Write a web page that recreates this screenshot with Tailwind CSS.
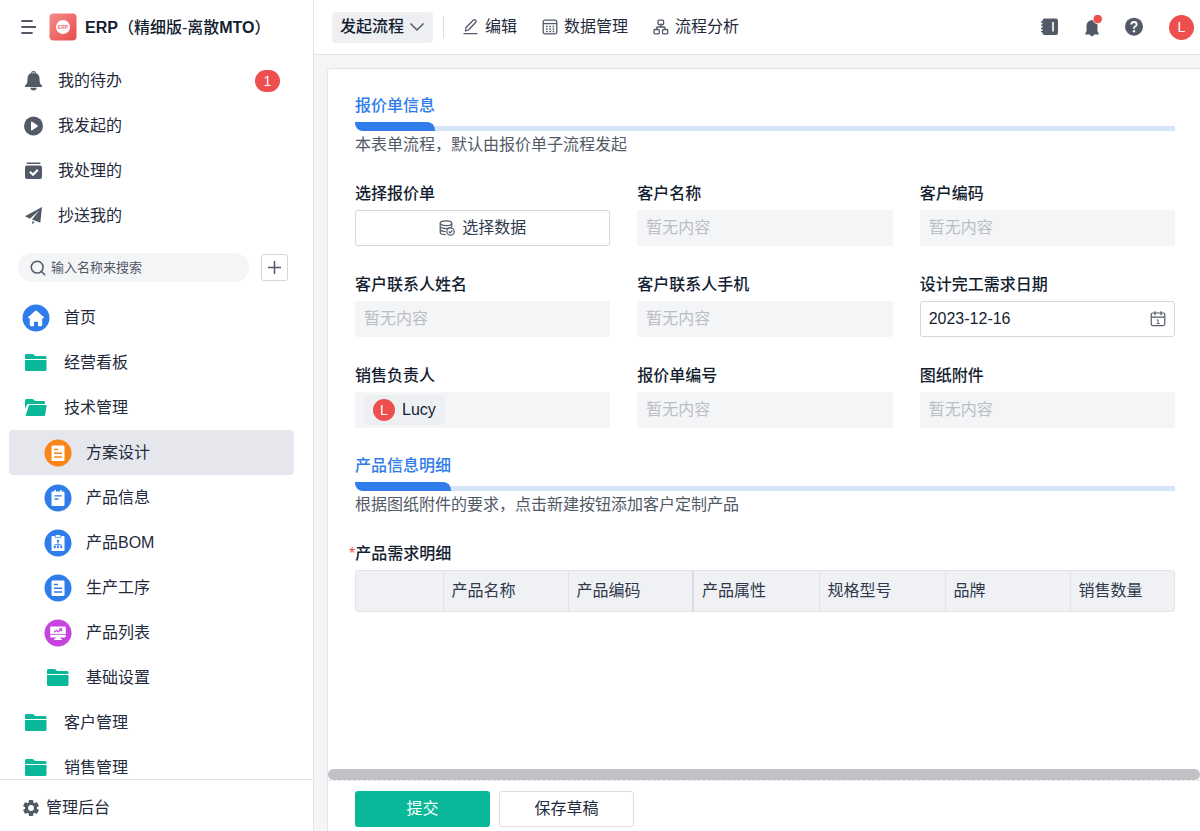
<!DOCTYPE html>
<html lang="zh-CN">
<head>
    <meta charset="UTF-8">
    <meta name="viewport" content="width=device-width, initial-scale=1.0">
    <title>ERP（精细版-离散MTO）</title>
    <script src="https://cdn.jsdelivr.net/npm/@tailwindcss/browser@4"></script>
</head>
<body class="flex h-screen overflow-hidden bg-[#f4f5f7] font-['Liberation_Sans','Noto_Sans_CJK_SC',sans-serif] text-base leading-6 text-[#1f2a3d]">
    <!-- Shared icons -->
    <svg class="hidden">
        <symbol id="folder" viewBox="0 0 22 18">
            <path fill="#08b899" d="M0 5V1.500Q0 0 1.500 0H7q1 0 1.700.6L10 2h10q1.500 0 1.500 1.500V5ZM0 6h21.500v9.500q0 1.500-1.500 1.500H1.500Q0 17 0 15.500Z"/>
        </symbol>
        <symbol id="folder-open" viewBox="0 0 22 18">
            <path fill="#08b899" d="M0 10V1.500Q0 0 1.500 0H7q1 0 1.700.6L10 2h8.500Q20 2 20 3.500V5H3.500Q2.200 5 1.800 6ZM4 6h16.500q1.200 0 1 1.200l-1.300 8.500q-.2 1.300-1.500 1.300H.6Z"/>
        </symbol>
        <symbol id="doc" viewBox="0 0 28 28">
            <circle cx="14" cy="14" r="13.500" fill="currentColor"/>
            <rect x="7.500" y="6.500" width="13" height="15.500" rx="1.200" fill="#fff"/>
            <path stroke="currentColor" stroke-width="1.400" d="M10 10.500h4M10 14.200h8M10 18h8"/>
        </symbol>
    </svg>

    <!-- Sidebar -->
    <aside class="flex w-[314px] shrink-0 flex-col border-r border-[#e2e4e8] bg-white">
        <div class="flex h-[54px] shrink-0 items-center pl-5">
            <button type="button" aria-label="菜单">
                <svg class="h-4 w-4" viewBox="0 0 16 16" fill="none" stroke="#525967" stroke-width="1.800" stroke-linecap="round"><path d="M2 2h10M2 8h14M2 14h10"/></svg>
            </button>
            <svg class="ml-[13px] h-7 w-7" viewBox="0 0 28 28">
                <defs>
                    <linearGradient id="logo" x1="0" y1="0" x2="1" y2="1"><stop offset="0" stop-color="#f58c8a"/><stop offset="1" stop-color="#e94b4b"/></linearGradient>
                </defs>
                <rect x=".5" y=".5" width="27" height="27" rx="4" fill="url(#logo)"/>
                <circle cx="14" cy="14" r="7" fill="#fff"/>
                <text x="14" y="15.800" font-size="5" font-weight="bold" text-anchor="middle" fill="#ee6b6a">ERP</text>
            </svg>
            <h1 class="mt-px ml-2 font-medium whitespace-nowrap text-[#141e31]"><b>ERP</b>（精细版-离散<b>MTO</b>）</h1>
        </div>

        <nav class="mt-1 text-[#1f2a3d]">
            <a href="#" class="flex h-[45px] items-center pl-6">
                <svg class="h-5 w-5" viewBox="0 0 20 20" fill="#525967"><path d="M9.500 0Q11.800 0 12 2.200q3.500 1.300 3.500 5.500 0 3.500.8 5 .6 1 1.700 1.700V16H1v-1.600q1.100-.7 1.700-1.700.8-1.500.8-5Q3.500 3.500 7 2.200 7.200 0 9.500 0Z"/><path d="M6 16.800h7q-.8 2.700-3.500 2.700T6 16.800Z"/><path d="M8.300 2q1.200-.8 2.400 0" stroke="#fff" fill="none"/></svg>
                <span class="ml-[14px]">我的待办</span>
                <span class="mr-[33px] ml-auto flex h-[22px] w-[25px] items-center justify-center rounded-full bg-[#ec4f4e] text-sm text-white">1</span>
            </a>
            <a href="#" class="flex h-[45px] items-center pl-6">
                <svg class="h-5 w-5" viewBox="0 0 20 20"><circle cx="9.500" cy="10" r="9.500" fill="#525967"/><path fill="#fff" d="M7 6.500q0-1.300 1.200-.7l5.200 3.500q.9.700 0 1.400l-5.200 3.500Q7 14.800 7 13.500Z"/></svg>
                <span class="ml-[14px]">我发起的</span>
            </a>
            <a href="#" class="flex h-[45px] items-center pl-6">
                <svg class="h-5 w-5" viewBox="0 0 20 20"><path fill="#525967" d="M3.500 1.500h12q1 0 1.200 1.500H2.300q.2-1.500 1.200-1.500ZM3 4.500h13q2 0 2 2V16q0 2-2 2H3q-2 0-2-2V6.500q0-2 2-2Z"/><path d="m6 10.700 3 3 4.800-4.800" fill="none" stroke="#fff" stroke-width="2.200"/></svg>
                <span class="ml-[14px]">我处理的</span>
            </a>
            <a href="#" class="flex h-[45px] items-center pl-6">
                <svg class="h-5 w-5" viewBox="0 0 20 20" fill="#525967"><path d="M18 1 1 10.300l5 2.500L15.500 4 8 13.600l8.300 3.200Zm-9.700 14v3.500l2.300-2.500Z"/></svg>
                <span class="ml-[14px]">抄送我的</span>
            </a>
        </nav>

        <div class="mt-[15px] mr-[25px] ml-[18px] flex shrink-0 items-center gap-3">
            <label class="flex h-[29px] min-w-0 flex-1 items-center gap-[5px] rounded-full bg-[#f4f5f7] pl-3">
                <svg class="h-4 w-4 shrink-0" viewBox="0 0 16 16" fill="none" stroke="#525967" stroke-width="1.500" stroke-linecap="round"><circle cx="7.200" cy="7.200" r="5.900"/><path d="m11.500 11.500 3.200 3.200"/></svg>
                <input type="text" aria-label="搜索" placeholder="输入名称来搜索" class="min-w-0 flex-1 bg-transparent text-[13px] leading-5 outline-none placeholder:text-[#525967]">
            </label>
            <button type="button" aria-label="新建" class="flex h-[27px] w-[27px] items-center justify-center rounded-[3px] border border-[#d5d7db]">
                <svg class="h-[13px] w-[13px]" viewBox="0 0 13 13" stroke="#525967" stroke-width="1.500"><path d="M6.500 0v13M0 6.500h13"/></svg>
            </button>
        </div>

        <nav class="mt-[13px] min-h-0 flex-1 overflow-hidden px-[9px]">
            <a href="#" class="flex h-[45px] items-center gap-[14px] pl-[13px]">
                <svg class="h-7 w-7" viewBox="0 0 28 28"><circle cx="14" cy="14" r="13.500" fill="#2f7ceb"/><path fill="#fff" d="M13.300 6.800q.7-.6 1.400 0l7 6.200q.8 1-.5 1.200h-1V21q0 1.200-1.200 1.200h-3v-4.500h-4v4.500H9q-1.200 0-1.200-1.200v-6.800h-1q-1.300-.2-.5-1.200Z"/></svg>
                首页
            </a>
            <a href="#" class="flex h-[45px] items-center gap-[17px] pl-4"><svg class="h-[18px] w-[22px]"><use href="#folder"/></svg>经营看板</a>
            <a href="#" class="flex h-[45px] items-center gap-[17px] pl-4"><svg class="h-[18px] w-[22px]"><use href="#folder-open"/></svg>技术管理</a>
            <a href="#" aria-current="page" class="mr-[10px] flex h-[45px] items-center gap-[14px] rounded bg-[#e6e7ec] pl-[35px]"><svg class="h-7 w-7 text-[#fa8418]"><use href="#doc"/></svg>方案设计</a>
            <a href="#" class="flex h-[45px] items-center gap-[14px] pl-[35px]">
                <svg class="h-7 w-7" viewBox="0 0 28 28"><circle cx="14" cy="14" r="13.500" fill="#2f7ceb"/><rect x="7.500" y="7.500" width="13" height="14.500" rx="1.200" fill="#fff"/><path stroke="#fff" stroke-width="1.500" d="M11.200 6v3M16.800 6v3"/><path stroke="#2f7ceb" stroke-width="1.300" d="M10.500 11.800h7.200M10.500 15h4"/></svg>
                产品信息
            </a>
            <a href="#" class="flex h-[45px] items-center gap-[14px] pl-[35px]">
                <svg class="h-7 w-7" viewBox="0 0 28 28"><circle cx="14" cy="14" r="13.500" fill="#2f7ceb"/><rect x="7.500" y="7" width="13" height="15" rx="1" fill="#fff"/><path fill="none" stroke="#2f7ceb" stroke-width=".8" d="M11 6.500v1.800h6V6.500M14 12v3.500M10.800 18v-2.300h6.400V18M14 15v3"/><path stroke="#fff" stroke-width="1.500" d="M11.700 6.700h4.600"/><g fill="#2f7ceb"><circle cx="14" cy="12" r="1.200"/><circle cx="10.800" cy="18.200" r="1.100"/><circle cx="14" cy="18.200" r="1.100"/><circle cx="17.200" cy="18.200" r="1.100"/></g></svg>
                产品BOM
            </a>
            <a href="#" class="flex h-[45px] items-center gap-[14px] pl-[35px]"><svg class="h-7 w-7 text-[#2f7ceb]"><use href="#doc"/></svg>生产工序</a>
            <a href="#" class="flex h-[45px] items-center gap-[14px] pl-[35px]">
                <svg class="h-7 w-7" viewBox="0 0 28 28"><circle cx="14" cy="14" r="13.500" fill="#c643dd"/><path fill="#fff" d="M7.200 7.500h13.600q1 0 1 1v6.700H6.200V8.500q0-1 1-1ZM6.200 16h15.600v1.500q0 1-1 1h-4.300v1.200h1.300V21h-7.600v-1.300h1.300v-1.200H7.200q-1 0-1-1Z"/><path fill="none" stroke="#c643dd" stroke-width="1.200" d="m10 13.200 2.300-2 1.700 1.700 3.300-2.900M15.300 9.800h2.300v2.500"/></svg>
                产品列表
            </a>
            <a href="#" class="flex h-[45px] items-center gap-[17px] pl-[38px]"><svg class="h-[18px] w-[22px]"><use href="#folder"/></svg>基础设置</a>
            <a href="#" class="flex h-[45px] items-center gap-[17px] pl-4"><svg class="h-[18px] w-[22px]"><use href="#folder"/></svg>客户管理</a>
            <a href="#" class="flex h-[45px] items-center gap-[17px] pl-4"><svg class="h-[18px] w-[22px]"><use href="#folder"/></svg>销售管理</a>
        </nav>

        <a href="#" class="flex h-[52px] shrink-0 items-center gap-[7px] border-t border-[#e2e4e8] pt-1 pl-[23px]">
            <svg class="h-4 w-4" viewBox="0 0 16 16"><g fill="#525967"><circle cx="8" cy="8" r="6"/><rect x="5.700" y="0" width="4.600" height="16" rx="1"/><rect x="5.700" y="0" width="4.600" height="16" rx="1" transform="rotate(60 8 8)"/><rect x="5.700" y="0" width="4.600" height="16" rx="1" transform="rotate(120 8 8)"/></g><circle cx="8" cy="8" r="2.900" fill="#fff"/></svg>
            管理后台
        </a>
    </aside>

    <div class="flex min-w-0 flex-1 flex-col">
        <!-- Top bar -->
        <header class="flex h-[55px] shrink-0 items-center border-b border-[#e5e7ea] bg-white pr-[6px] pl-[18px]">
            <button type="button" class="flex h-[31px] items-center gap-[5px] rounded bg-[#eeeff2] px-2 font-medium text-[#141e31]">
                发起流程
                <svg class="h-4 w-4" viewBox="0 0 16 16" fill="none" stroke="#525967" stroke-width="1.500"><path d="m1.500 4.500 6.500 6.500 6.500-6.500"/></svg>
            </button>
            <span class="ml-[10px] h-[22px] w-px bg-[#dcdee2]"></span>
            <nav class="ml-[19px] flex items-center gap-[25px]">
                <a href="#" class="flex items-center gap-[6px]">
                    <svg class="h-4 w-4" viewBox="0 0 16 16" fill="none" stroke="#525967" stroke-width="1.300" stroke-linejoin="round"><path d="m2.500 12 .5-3.500L10.500 1q1-.7 2 .3t.2 2L5.500 11ZM.5 14.700h14"/></svg>
                    编辑
                </a>
                <a href="#" class="flex items-center gap-[6px]">
                    <svg class="h-4 w-4" viewBox="0 0 16 16" fill="none" stroke="#525967" stroke-width="1.300"><rect x="1.200" y="1.200" width="13.600" height="13.600" rx="1.800"/><path d="M1.200 4.600h13.600"/><path stroke-dasharray="1.600 1.700" stroke-width="1.500" d="M4 7.400h9M4 9.900h9M4 12.400h9"/></svg>
                    数据管理
                </a>
                <a href="#" class="flex items-center gap-[6px]">
                    <svg class="h-4 w-4" viewBox="0 0 16 16" fill="none" stroke="#525967" stroke-width="1.300"><rect x="5" y="1.200" width="5.600" height="4.300" rx="1"/><rect x="1" y="10.500" width="5.300" height="4.300" rx="1"/><rect x="9.500" y="10.500" width="5.300" height="4.300" rx="1"/><path d="M7.800 5.500V8M3.600 10.500V9q0-1 1-1h6.500q1 0 1 1v1.500"/></svg>
                    流程分析
                </a>
            </nav>
            <div class="ml-auto flex items-center">
                <button type="button" aria-label="通讯录"><svg class="h-5 w-5" viewBox="0 0 20 20"><rect x="2.500" y="1.500" width="15.500" height="16.500" rx="2" fill="#525967"/><path stroke="#525967" stroke-width="1.300" d="M1 5h3M1 8.200h3M1 11.500h3M1 14.700h3"/><path stroke="#fff" stroke-width="1.600" d="M13 5v9.500"/></svg></button>
                <button type="button" aria-label="消息" class="ml-[21px]"><svg class="h-6 w-6" viewBox="0 0 24 24"><path fill="#525967" d="M9.500 5.500q1.500-1 3 0 4 1 4 5.500v5q0 1 1.200 2v1.500H4.300V18q1.200-1 1.200-2v-5q0-4.500 4-5.500ZM8.800 19.500h4.400q-.5 1.800-2.200 1.800t-2.200-1.800Z"/><circle cx="16.700" cy="4" r="4.700" fill="#ec4f4e" stroke="#fff" stroke-width=".8"/></svg></button>
                <button type="button" aria-label="帮助" class="ml-[19px]"><svg class="h-5 w-5" viewBox="0 0 20 20"><circle cx="10" cy="9.700" r="9" fill="#525967"/><path fill="none" stroke="#fff" stroke-width="1.900" d="M7.200 7.500Q7.500 5 10 5t2.700 2.300Q12.700 8.700 11 9.500q-1 .6-1 2.200"/><circle cx="10" cy="14.200" r="1.200" fill="#fff"/></svg></button>
                <button type="button" aria-label="账号" class="ml-[25px] h-[25px] w-[25px] rounded-full bg-[#ec4f4e] text-sm text-white">L</button>
            </div>
        </header>

        <main class="mt-[13px] ml-[13px] flex min-h-0 flex-1 flex-col rounded-tl border-t border-l border-[#e2e4e8] bg-white">
            <form class="min-h-0 flex-1 overflow-hidden pt-[25px] pr-[25px] pl-[27px]">
                <!-- Quotation info -->
                <section>
                    <div class="flex items-end">
                        <h2 class="font-medium text-[#2f7ceb]">
                            报价单信息
                            <span class="mt-1 block h-[9px] rounded-tr-lg rounded-bl-lg bg-[#2f7ceb]"></span>
                        </h2>
                        <span class="h-[5px] flex-1 bg-[#d6e5fa]"></span>
                    </div>
                    <p class="mt-0.5 text-[#525967]">本表单流程，默认由报价单子流程发起</p>

                    <div class="mt-[25px] grid grid-cols-3 gap-x-[27px] gap-y-[27px] text-[#141e31]">
                        <div>
                            <label for="pick" class="block font-medium">选择报价单</label>
                            <button id="pick" type="button" class="mt-1 flex h-9 w-full items-center justify-center gap-[7px] rounded-[3px] border border-[#d5d7db] text-[#2f394c]">
                                <svg class="h-4 w-4" viewBox="0 0 16 16" fill="none" stroke="#525967" stroke-width="1.200"><ellipse cx="7" cy="3.200" rx="5.800" ry="2.400"/><path d="M1.200 3.200v9.300q0 2 5.500 2.200M12.800 3.200v3.500M1.200 6.400q.5 2 5.800 2.200 3.500 0 5.800-1.600M1.200 9.500q.5 1.800 5.300 2.100"/><circle cx="11.500" cy="11.500" r="3.700" fill="#fff"/><path d="m9.800 11.500 1.300 1.300 2.200-2.300"/></svg>
                                选择数据
                            </button>
                        </div>
                        <div>
                            <label for="customer" class="block font-medium">客户名称</label>
                            <input id="customer" type="text" readonly placeholder="暂无内容" class="mt-1 block h-9 w-full rounded-[2px] bg-[#f4f5f7] px-[9px] placeholder:text-[#bbbec5]">
                        </div>
                        <div>
                            <label for="customer-code" class="block font-medium">客户编码</label>
                            <input id="customer-code" type="text" readonly placeholder="暂无内容" class="mt-1 block h-9 w-full rounded-[2px] bg-[#f4f5f7] px-[9px] placeholder:text-[#bbbec5]">
                        </div>
                        <div>
                            <label for="contact" class="block font-medium">客户联系人姓名</label>
                            <input id="contact" type="text" readonly placeholder="暂无内容" class="mt-1 block h-9 w-full rounded-[2px] bg-[#f4f5f7] px-[9px] placeholder:text-[#bbbec5]">
                        </div>
                        <div>
                            <label for="phone" class="block font-medium">客户联系人手机</label>
                            <input id="phone" type="text" readonly placeholder="暂无内容" class="mt-1 block h-9 w-full rounded-[2px] bg-[#f4f5f7] px-[9px] placeholder:text-[#bbbec5]">
                        </div>
                        <div>
                            <label for="due" class="block font-medium">设计完工需求日期</label>
                            <div class="mt-1 flex h-9 items-center rounded-[3px] border border-[#d5d7db] px-2">
                                <input id="due" type="text" value="2023-12-16" class="min-w-0 flex-1 outline-none">
                                <svg class="h-4 w-4" viewBox="0 0 16 16" fill="none" stroke="#525967" stroke-width="1.200"><rect x="1.200" y="2" width="13.600" height="12.600" rx="1.800"/><path d="M1.200 6.200h13.600M5 .3v4M11 .3v4"/><path stroke-width=".9" d="m6.800 9.300 1.300-.6v3.800M6.500 12.500h3.200"/></svg>
                            </div>
                        </div>
                        <div>
                            <span class="block font-medium">销售负责人</span>
                            <div class="mt-1 flex h-9 items-center rounded-[2px] bg-[#f4f5f7] px-[9px]">
                                <span class="flex h-[30px] items-center gap-[7px] rounded bg-[#eeeff3] px-[9px]">
                                    <span class="flex h-[22px] w-[22px] items-center justify-center rounded-full bg-[#ec4f4e] text-sm text-white">L</span>
                                    Lucy
                                </span>
                            </div>
                        </div>
                        <div>
                            <label for="quote-no" class="block font-medium">报价单编号</label>
                            <input id="quote-no" type="text" readonly placeholder="暂无内容" class="mt-1 block h-9 w-full rounded-[2px] bg-[#f4f5f7] px-[9px] placeholder:text-[#bbbec5]">
                        </div>
                        <div>
                            <label for="drawing" class="block font-medium">图纸附件</label>
                            <input id="drawing" type="text" readonly placeholder="暂无内容" class="mt-1 block h-9 w-full rounded-[2px] bg-[#f4f5f7] px-[9px] placeholder:text-[#bbbec5]">
                        </div>
                    </div>
                </section>

                <!-- Product details -->
                <section class="mt-[26px]">
                    <div class="flex items-end">
                        <h2 class="font-medium text-[#2f7ceb]">
                            产品信息明细
                            <span class="mt-1 block h-[9px] rounded-tr-lg rounded-bl-lg bg-[#2f7ceb]"></span>
                        </h2>
                        <span class="h-[5px] flex-1 bg-[#d6e5fa]"></span>
                    </div>
                    <p class="mt-0.5 text-[#525967]">根据图纸附件的要求，点击新建按钮添加客户定制产品</p>

                    <h3 id="items-title" class="-ml-[6px] mt-[25px] font-medium text-[#141e31]"><span class="text-[#ec4f4e]">*</span>产品需求明细</h3>
                    <div class="mt-1 overflow-hidden rounded-[3px] border border-[#e2e3e7] bg-[#f0f1f4]">
                        <table aria-labelledby="items-title" class="w-full table-fixed text-left text-[#2f394c]">
                            <thead>
                                <tr class="h-10">
                                    <th class="w-[87px] border-r border-[#e2e3e7]"></th>
                                    <th class="w-[125px] border-r border-[#e2e3e7] px-2 font-normal">产品名称</th>
                                    <th class="w-[125px] border-r-2 border-[#dadbe0] px-2 font-normal">产品编码</th>
                                    <th class="w-[126px] border-r border-[#e2e3e7] px-2 font-normal">产品属性</th>
                                    <th class="w-[126px] border-r border-[#e2e3e7] px-2 font-normal">规格型号</th>
                                    <th class="w-[125px] border-r border-[#e2e3e7] px-2 font-normal">品牌</th>
                                    <th class="px-2 font-normal">销售数量</th>
                                </tr>
                            </thead>
                        </table>
                    </div>
                </section>
            </form>

            <div class="h-[11px] shrink-0 rounded-full bg-[#c1c2c5]"></div>
            <footer class="flex h-[51px] shrink-0 gap-[9px] border-t border-dashed border-[#e2e4e8] pt-[10px] pl-[27px]">
                <button type="submit" class="h-9 w-[135px] rounded-[3px] bg-[#08b899] text-white">提交</button>
                <button type="button" class="h-9 w-[135px] rounded-[3px] border border-[#dcdee2]">保存草稿</button>
            </footer>
        </main>
    </div>
</body>
</html>
